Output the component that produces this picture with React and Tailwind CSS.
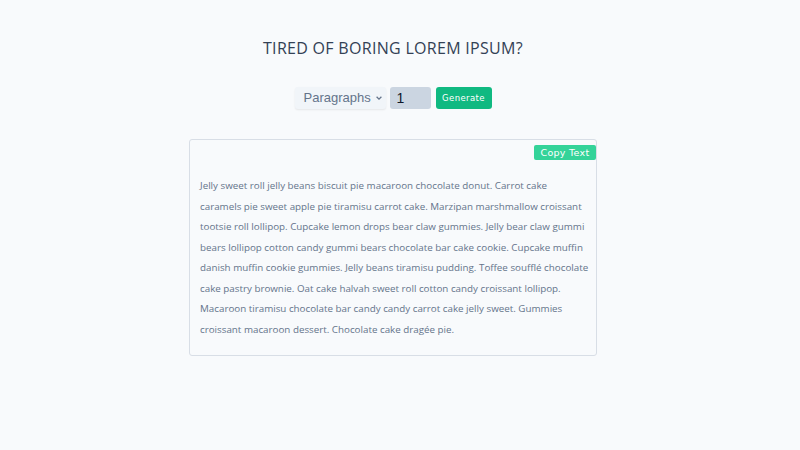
import React, { useState } from "react";

const LINES = [
  "Jelly sweet roll jelly beans biscuit pie macaroon chocolate donut. Carrot cake",
  "caramels pie sweet apple pie tiramisu carrot cake. Marzipan marshmallow croissant",
  "tootsie roll lollipop. Cupcake lemon drops bear claw gummies. Jelly bear claw gummi",
  "bears lollipop cotton candy gummi bears chocolate bar cake cookie. Cupcake muffin",
  "danish muffin cookie gummies. Jelly beans tiramisu pudding. Toffee soufflé chocolate",
  "cake pastry brownie. Oat cake halvah sweet roll cotton candy croissant lollipop.",
  "Macaroon tiramisu chocolate bar candy candy carrot cake jelly sweet. Gummies",
  "croissant macaroon dessert. Chocolate cake dragée pie.",
];

const App = () => {
  const [count, setCount] = useState(1);

  return (
    <div className="min-h-[450px] w-full bg-[#f8fafc] pr-[14px] pt-[38px] font-['Open_Sans',sans-serif]">
      {/* Title */}
      <h1 className="text-center text-[16px] leading-[20px] tracking-[0.3px] text-[#334155]">
        TIRED OF BORING LOREM IPSUM?
      </h1>

      {/* Controls */}
      <div className="mt-[29px] flex items-center justify-center gap-[4px]">
        <div className="flex h-[22px] w-[91px] items-center rounded-[3px] bg-[#f1f5f9] pl-[9px] pr-[3px] shadow-[0_1px_2px_rgba(0,0,0,0.08)]">
          <span className="font-['Liberation_Sans',sans-serif] text-[13px] text-[#64748b]">Paragraphs</span>
          <svg className="ml-auto" width="8" height="8" viewBox="0 0 10 10" fill="none">
            <path d="M2 3.5 L5 6.5 L8 3.5" stroke="#64748b" strokeWidth="1.6" />
          </svg>
        </div>
        <input
          type="number"
          value={count}
          onChange={(e) => setCount(e.target.value)}
          className="h-[22px] w-[41px] rounded-[3px] bg-[#cbd5e1] pl-[7px] font-['Liberation_Sans',sans-serif] text-[14px] text-[#0f172a] outline-none [appearance:textfield]"
        />
        <button className="ml-[1px] h-[22px] w-[56px] rounded-[3px] bg-[#10b981] font-['DejaVu_Sans',sans-serif] text-[8.5px] tracking-[0.4px] text-white">
          Generate
        </button>
      </div>

      {/* Card */}
      <div className="mx-auto mt-[30px] w-[408px] rounded-[3px] border border-[#d8dee6] bg-[#f8fafc] pb-[15px]">
        <div className="flex justify-end pt-[5px]">
          <button className="h-[15px] w-[62px] rounded-[2px] bg-[#34d399] font-['DejaVu_Sans',sans-serif] text-[9.5px] leading-[15px] tracking-[0.3px] text-white">
            Copy Text
          </button>
        </div>
        <p className="mt-[16px] whitespace-nowrap px-[10px] text-[9.8px] leading-[20.5px] text-[#64748b]">
          {LINES.map((l, i) => (
            <React.Fragment key={i}>
              {l}
              {i < LINES.length - 1 && <br />}
            </React.Fragment>
          ))}
        </p>
      </div>
    </div>
  );
};

export default App;
